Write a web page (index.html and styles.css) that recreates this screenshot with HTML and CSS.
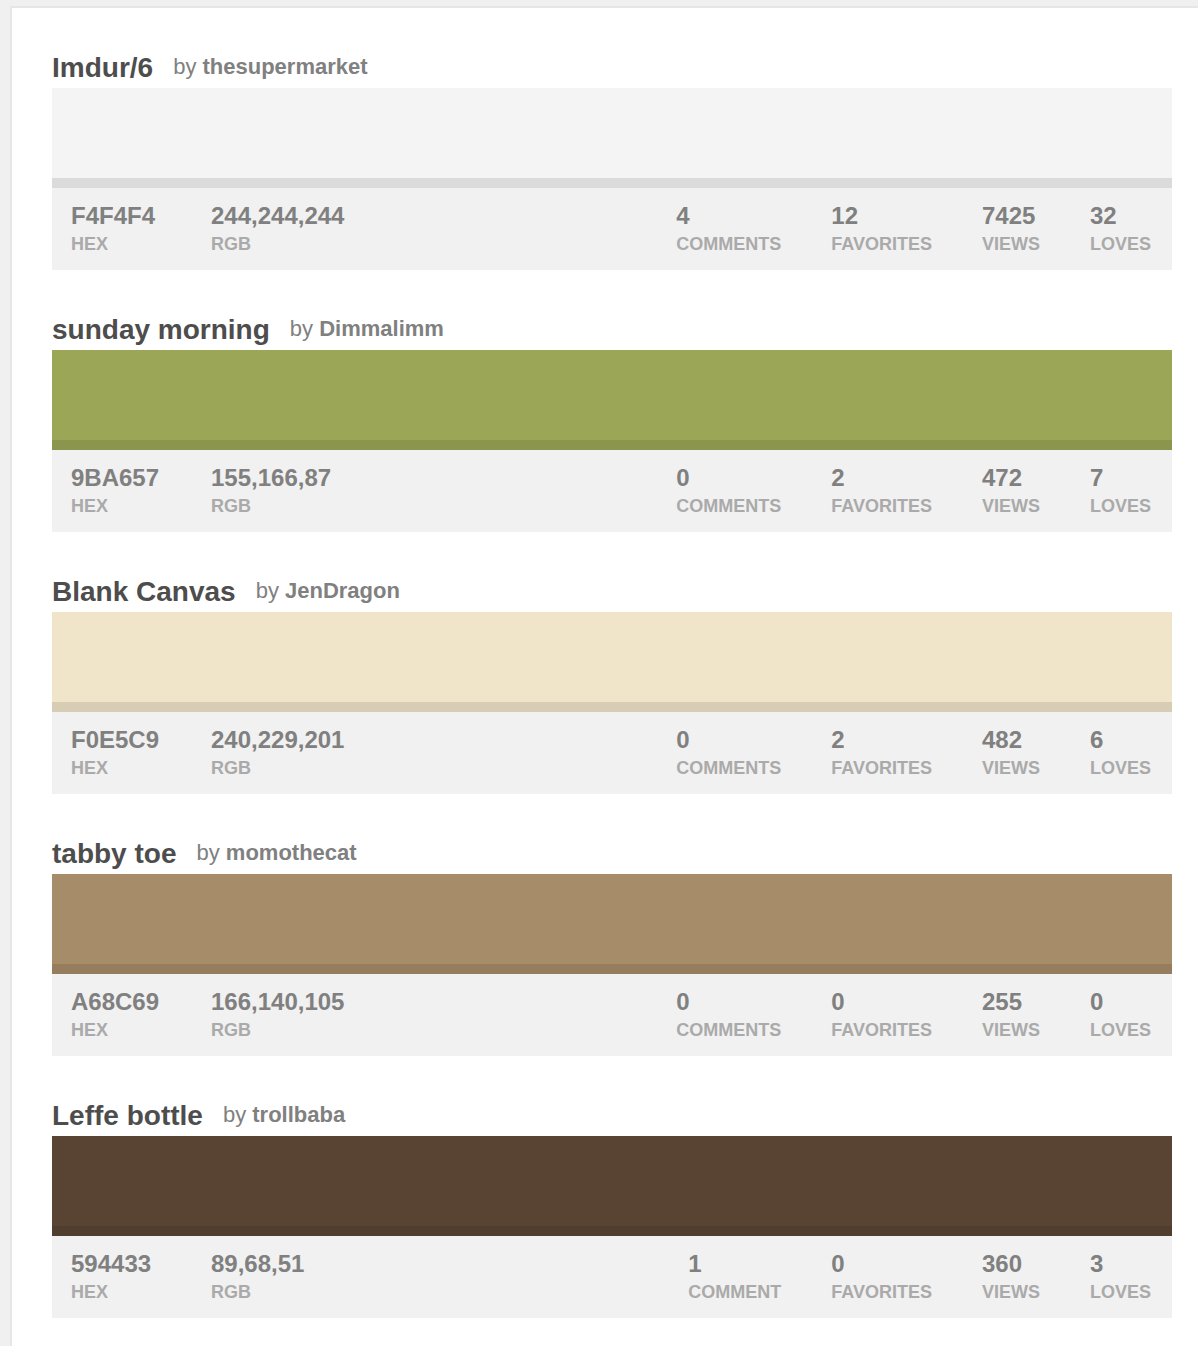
FILE: index.html
```html
<!DOCTYPE html>
<html lang="en">
<head>
<meta charset="utf-8">
<title>Colors</title>
<link rel="stylesheet" href="styles.css">
</head>
<body>
<main class="panel">
  <article class="color">
    <header class="heading"><h2><a href="#">Imdur/6</a></h2><p>by <a href="#">thesupermarket</a></p></header>
    <div class="swatch" style="background-color:#f4f4f4"></div>
    <dl class="meta">
      <div class="hex"><dt>Hex</dt><dd>F4F4F4</dd></div>
      <div class="rgb"><dt>RGB</dt><dd>244,244,244</dd></div>
      <div><dt>Comments</dt><dd>4</dd></div>
      <div><dt>Favorites</dt><dd>12</dd></div>
      <div><dt>Views</dt><dd>7425</dd></div>
      <div><dt>Loves</dt><dd>32</dd></div>
    </dl>
  </article>
  <article class="color">
    <header class="heading"><h2><a href="#">sunday morning</a></h2><p>by <a href="#">Dimmalimm</a></p></header>
    <div class="swatch" style="background-color:#9ba657"></div>
    <dl class="meta">
      <div class="hex"><dt>Hex</dt><dd>9BA657</dd></div>
      <div class="rgb"><dt>RGB</dt><dd>155,166,87</dd></div>
      <div><dt>Comments</dt><dd>0</dd></div>
      <div><dt>Favorites</dt><dd>2</dd></div>
      <div><dt>Views</dt><dd>472</dd></div>
      <div><dt>Loves</dt><dd>7</dd></div>
    </dl>
  </article>
  <article class="color">
    <header class="heading"><h2><a href="#">Blank Canvas</a></h2><p>by <a href="#">JenDragon</a></p></header>
    <div class="swatch" style="background-color:#f0e5c9"></div>
    <dl class="meta">
      <div class="hex"><dt>Hex</dt><dd>F0E5C9</dd></div>
      <div class="rgb"><dt>RGB</dt><dd>240,229,201</dd></div>
      <div><dt>Comments</dt><dd>0</dd></div>
      <div><dt>Favorites</dt><dd>2</dd></div>
      <div><dt>Views</dt><dd>482</dd></div>
      <div><dt>Loves</dt><dd>6</dd></div>
    </dl>
  </article>
  <article class="color">
    <header class="heading"><h2><a href="#">tabby toe</a></h2><p>by <a href="#">momothecat</a></p></header>
    <div class="swatch" style="background-color:#a68c69"></div>
    <dl class="meta">
      <div class="hex"><dt>Hex</dt><dd>A68C69</dd></div>
      <div class="rgb"><dt>RGB</dt><dd>166,140,105</dd></div>
      <div><dt>Comments</dt><dd>0</dd></div>
      <div><dt>Favorites</dt><dd>0</dd></div>
      <div><dt>Views</dt><dd>255</dd></div>
      <div><dt>Loves</dt><dd>0</dd></div>
    </dl>
  </article>
  <article class="color">
    <header class="heading"><h2><a href="#">Leffe bottle</a></h2><p>by <a href="#">trollbaba</a></p></header>
    <div class="swatch" style="background-color:#594433"></div>
    <dl class="meta">
      <div class="hex"><dt>Hex</dt><dd>594433</dd></div>
      <div class="rgb"><dt>RGB</dt><dd>89,68,51</dd></div>
      <div><dt>Comment</dt><dd>1</dd></div>
      <div><dt>Favorites</dt><dd>0</dd></div>
      <div><dt>Views</dt><dd>360</dd></div>
      <div><dt>Loves</dt><dd>3</dd></div>
    </dl>
  </article>
</main>
</body>
</html>
```
FILE: styles.css
```css
* { box-sizing: border-box; margin: 0; padding: 0; }
body {
  background: #f0f0f0;
  font-family: "Liberation Sans", Arial, Helvetica, sans-serif;
  color: #808080;
}
a { color: inherit; text-decoration: none; }
.panel {
  margin: 6px 0 0 10px;
  padding: 40px 26px 28px 40px;
  background: #fff;
  border: solid #e6e6e6;
  border-width: 2px 0 0 2px;
  display: flex;
  flex-direction: column;
  gap: 40px;
}
.heading {
  display: flex;
  align-items: center;
  gap: 20px;
  height: 40px;
}
.heading h2 { font-size: 28px; line-height: 40px; color: #4d4d4d; }
.heading p { font-size: 22px; line-height: 38px; height: 40px; }
.heading p a { font-weight: bold; }
.swatch { height: 100px; border-bottom: 10px solid rgba(0, 0, 0, 0.1); }
.meta {
  display: flex;
  gap: 50px;
  padding: 14px 21px 12px 19px;
  background: #f1f1f1;
  font-weight: bold;
}
.meta div { display: flex; flex-direction: column-reverse; }
.meta dd { font-size: 24px; line-height: 28px; }
.meta dt { font-size: 18px; line-height: 28px; color: #aaa; text-transform: uppercase; }
.meta .hex { width: 90px; }
.meta .rgb { margin-right: auto; }
```
